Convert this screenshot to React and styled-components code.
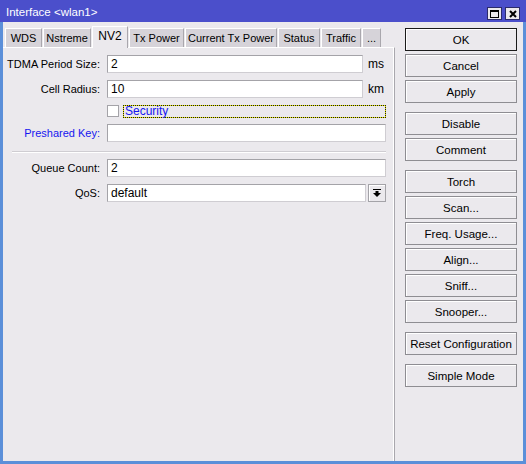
import React from 'react';
import styled, { createGlobalStyle } from 'styled-components';

const Global = createGlobalStyle`
  html, body {
    margin: 0;
    padding: 0;
    background: #5b8fd9;
  }
  body {
    font-family: "Liberation Sans", Arial, sans-serif;
    font-size: 11px;
    color: #000;
  }
`;

const Window = styled.div`
  width: 526px;
  height: 464px;
  box-sizing: border-box;
  border: 3px solid #5b8fd9;
  border-top: 0;
  background: #ebe9ed;
  display: flex;
  flex-direction: column;
`;

const TitleBar = styled.div`
  height: 22px;
  margin: 0 -3px;
  padding: 0 6px 0 6px;
  background: #4b4fcb;
  display: flex;
  align-items: center;
  justify-content: space-between;
`;

const Title = styled.span`
  color: #fff;
  font-size: 11.5px;
  padding-top: 1px;
`;

const Controls = styled.div`
  display: flex;
  gap: 3px;
  margin-top: 5px;
`;

const CtlButton = styled.div`
  width: 13px;
  height: 11px;
  background: #ebe9ed;
  border: 1px solid #2b2b6b;
  display: flex;
  align-items: center;
  justify-content: center;
`;

const Body = styled.div`
  flex: 1;
  display: flex;
`;

const Main = styled.div`
  width: 392px;
  display: flex;
  flex-direction: column;
`;

const TabStrip = styled.div`
  height: 25px;
  display: flex;
  align-items: flex-end;
  gap: 1px;
  padding-left: 2px;
  position: relative;
  z-index: 1;
`;

const Tab = styled.div`
  flex: 0 0 ${p => p.$w}px;
  height: ${p => (p.$active ? '22px' : '19px')};
  margin-bottom: ${p => (p.$active ? '-1px' : '0')};
  padding-bottom: ${p => (p.$active ? '3px' : '0')};
  box-sizing: border-box;
  background: ${p => (p.$active ? '#ebe9ed' : '#d6d3d9')};
  border-top: 1px solid #fff;
  border-left: 1px solid #fff;
  border-right: 1px solid #a9a7ad;
  display: flex;
  align-items: center;
  justify-content: center;
  white-space: nowrap;
  font-size: ${p => (p.$active ? '12px' : '11px')};
`;

const Panel = styled.div`
  flex: 1;
  border-top: 1px solid #fff;
  border-right: 1px solid #a9a7ad;
  box-shadow: inset -1px 0 0 #fff;
  padding: 7px 0 0 0;
  display: flex;
  flex-direction: column;
  gap: 7px;
`;

const Row = styled.div`
  display: flex;
  align-items: center;
  height: ${p => p.$h || 18}px;
`;

const Label = styled.div`
  width: 97px;
  margin-right: 7px;
  text-align: right;
  white-space: nowrap;
  color: ${p => (p.$blue ? '#1616f0' : '#000')};
`;

const Field = styled.div`
  width: 279px;
  display: flex;
  align-items: center;
  gap: 2px;
`;

const Input = styled.div`
  flex: 1;
  height: 18px;
  box-sizing: border-box;
  background: #fff;
  border: 1px solid #a4a3a8;
  border-right-color: #cfcdd2;
  border-bottom-color: #cfcdd2;
  padding: 0 3px;
  display: flex;
  align-items: center;
  font-size: 12px;
`;

const Unit = styled.span`
  width: 18px;
  padding-left: 3px;
  font-size: 12px;
`;

const CheckBox = styled.div`
  width: 12px;
  height: 12px;
  box-sizing: border-box;
  background: #fff;
  border: 1px solid #a4a3a8;
  margin-right: 2px;
`;

const CheckLabel = styled.div`
  flex: 1;
  height: 13px;
  box-sizing: border-box;
  border: 1px dotted #1a1a1a;
  background: linear-gradient(#ebe9ed, #ebe9ed) padding-box, #eaea00 border-box;
  color: #1616f0;
  padding-left: 1px;
  display: flex;
  align-items: center;
  font-size: 12px;
`;

const Separator = styled.div`
  margin: 2px 0 -1px 9px;
  width: 374px;
  height: 1px;
  background: #cfcdd2;
  border-bottom: 1px solid #fff;
`;

const DropButton = styled.div`
  width: 18px;
  height: 18px;
  box-sizing: border-box;
  background: #ebe9ed;
  border: 1px solid #a4a3a8;
  box-shadow: inset 1px 1px 0 #fff;
  display: flex;
  align-items: center;
  justify-content: center;
`;

const Side = styled.div`
  flex: 1;
  padding: 6px 6px 0 10px;
  display: flex;
  flex-direction: column;
  gap: 9px;
`;

const Group = styled.div`
  display: flex;
  flex-direction: column;
  gap: 3px;
`;

const Button = styled.div`
  height: 23px;
  box-sizing: border-box;
  border: 1px solid ${p => (p.$default ? '#1a1a1a' : '#8e8d92')};
  box-shadow: inset 1px 1px 0 #fff;
  background: #ebe9ed;
  display: flex;
  align-items: center;
  justify-content: center;
  font-size: 11.5px;
`;

const tabs = [
  ['WDS', 37],
  ['Nstreme', 48],
  ['NV2', 36],
  ['Tx Power', 55],
  ['Current Tx Power', 92],
  ['Status', 42],
  ['Traffic', 40],
  ['...', 19],
];

const groups = [
  ['OK', 'Cancel', 'Apply'],
  ['Disable', 'Comment'],
  ['Torch', 'Scan...', 'Freq. Usage...', 'Align...', 'Sniff...', 'Snooper...'],
  ['Reset Configuration'],
  ['Simple Mode'],
];

export default function App() {
  return (
    <>
      <Global />
      <Window>
        <TitleBar>
          <Title>Interface &lt;wlan1&gt;</Title>
          <Controls>
            <CtlButton>
              <svg width="9" height="8" viewBox="0 0 9 8">
                <rect x="0.5" y="0.5" width="8" height="7" fill="none" stroke="#000" />
                <rect x="0" y="0" width="9" height="2" fill="#000" />
              </svg>
            </CtlButton>
            <CtlButton>
              <svg width="8" height="8" viewBox="0 0 8 8">
                <path d="M1 1 L7 7 M7 1 L1 7" stroke="#000" strokeWidth="2" />
              </svg>
            </CtlButton>
          </Controls>
        </TitleBar>
        <Body>
          <Main>
            <TabStrip>
              {tabs.map(([t, w]) => (
                <Tab key={t} $w={w} $active={t === 'NV2'}>{t}</Tab>
              ))}
            </TabStrip>
            <Panel>
              <Row>
                <Label>TDMA Period Size:</Label>
                <Field>
                  <Input>2</Input>
                  <Unit>ms</Unit>
                </Field>
              </Row>
              <Row>
                <Label>Cell Radius:</Label>
                <Field>
                  <Input>10</Input>
                  <Unit>km</Unit>
                </Field>
              </Row>
              <Row $h={12}>
                <Label />
                <Field>
                  <CheckBox />
                  <CheckLabel>Security</CheckLabel>
                </Field>
              </Row>
              <Row>
                <Label $blue>Preshared Key:</Label>
                <Field>
                  <Input />
                </Field>
              </Row>
              <Separator />
              <Row>
                <Label>Queue Count:</Label>
                <Field>
                  <Input>2</Input>
                </Field>
              </Row>
              <Row>
                <Label>QoS:</Label>
                <Field>
                  <Input>default</Input>
                  <DropButton>
                    <svg width="8" height="8" viewBox="0 0 8 8">
                      <rect x="0" y="0" width="8" height="1" fill="#000" />
                      <rect x="2.5" y="2" width="3" height="2" fill="#000" />
                      <path d="M0 4 L8 4 L4 8 Z" fill="#000" />
                    </svg>
                  </DropButton>
                </Field>
              </Row>
            </Panel>
          </Main>
          <Side>
            {groups.map((g, i) => (
              <Group key={i}>
                {g.map(b => (
                  <Button key={b} $default={b === 'OK'}>{b}</Button>
                ))}
              </Group>
            ))}
          </Side>
        </Body>
      </Window>
    </>
  );
}
